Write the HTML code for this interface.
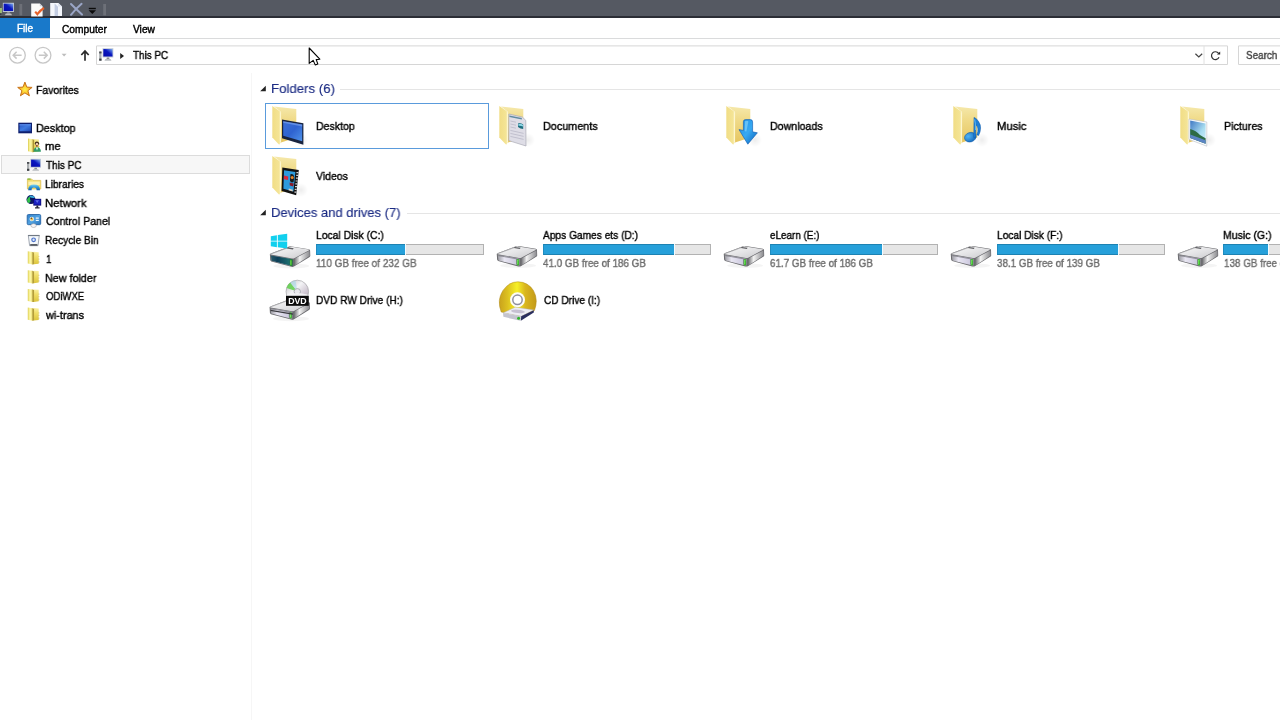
<!DOCTYPE html>
<html>
<head>
<meta charset="utf-8">
<title>This PC</title>
<style>
*{box-sizing:border-box;margin:0;padding:0}
html,body{width:1280px;height:720px;overflow:hidden;background:#fff}
body{font-family:"Liberation Sans",sans-serif;font-size:11.5px;color:#000;position:relative}
.abs{position:absolute}
.t{-webkit-text-stroke:.4px currentColor;will-change:transform;position:absolute;white-space:nowrap;transform-origin:0 50%;line-height:14px;height:14px}
#titlebar{left:0;top:0;width:1280px;height:18px;background:#555962;border-bottom:2px solid #2b2d35}
#ribbon{left:0;top:18px;width:1280px;height:21px;background:#fff;border-bottom:1px solid #dadbdc}
#filetab{left:0;top:18px;width:50px;height:20px;background:#1979ca}
#navdiv{left:251px;top:73px;width:1px;height:647px;background:#f6f6f6}
#selrow{left:1px;top:155px;width:249px;height:19px;background:#f7f7f7;border:1px solid #dcdcdc}
.gh{color:#1c2c84;font-size:13.5px;line-height:16px;height:16px;-webkit-text-stroke:.15px currentColor}
.gline{position:absolute;height:1px;background:#e5e5e5}
.bar{position:absolute;height:11px;border:1px solid #b2b2b2;background:#e6e6e6}
.bar i{position:absolute;left:-1px;top:-1px;height:11px;background:#26a0da;border-top:1px solid #1d82b2;border-bottom:1px solid #1d82b2;border-left:1px solid #1f8cc0;box-shadow:1px 0 0 #f2fbff;display:block}
.sub{color:#6d6d6d}
#selbox{left:265px;top:103px;width:224px;height:46px;border:1px solid #5a9bdc}
</style>
</head>
<body>
<!-- title bar -->
<div id="titlebar" class="abs"></div>
<!-- ribbon -->
<div id="ribbon" class="abs"></div>
<div id="filetab" class="abs"></div>
<span class="t" style="left:17px;top:22.4px;color:#fff;font-size:10px;transform:scaleX(1.0)">File</span>
<span class="t" style="left:61.6px;top:23px;font-size:10px;transform:scaleX(1.02)">Computer</span>
<span class="t" style="left:133.4px;top:23px;font-size:10px;transform:scaleX(1.02)">View</span>
<!-- nav row -->
<span class="t" style="left:133px;top:48px;transform:scaleX(.86)">This PC</span>
<span class="t" style="left:1246px;top:48px;transform:scaleX(0.86);color:#444">Search</span>
<!-- sidebar -->
<div id="navdiv" class="abs"></div>
<div id="selrow" class="abs"></div>
<span class="t" style="left:36px;top:83px;transform:scaleX(0.905)">Favorites</span>
<span class="t" style="left:36.2px;top:121px;transform:scaleX(0.937)">Desktop</span>
<span class="t" style="left:45.4px;top:139px;transform:scaleX(0.98)">me</span>
<span class="t" style="left:45.8px;top:158px;transform:scaleX(0.867)">This PC</span>
<span class="t" style="left:45.4px;top:177px;transform:scaleX(0.885)">Libraries</span>
<span class="t" style="left:45.4px;top:195.5px;transform:scaleX(0.985)">Network</span>
<span class="t" style="left:45.8px;top:214px;transform:scaleX(0.922)">Control Panel</span>
<span class="t" style="left:45.4px;top:233px;transform:scaleX(0.885)">Recycle Bin</span>
<span class="t" style="left:46px;top:252px;transform:scaleX(.87)">1</span>
<span class="t" style="left:45.4px;top:270.5px;transform:scaleX(0.935)">New folder</span>
<span class="t" style="left:45.6px;top:289px;transform:scaleX(0.83)">ODiWXE</span>
<span class="t" style="left:45.6px;top:308px;transform:scaleX(0.945)">wi-trans</span>
<!-- main: group headers -->
<span class="t gh" style="left:271.2px;top:81px;transform:scaleX(0.98)">Folders (6)</span>
<div class="gline" style="left:340px;top:89px;width:940px"></div>
<span class="t gh" style="left:271.2px;top:205px;transform:scaleX(0.965)">Devices and drives (7)</span>
<div class="gline" style="left:407px;top:213px;width:873px"></div>
<div id="selbox" class="abs"></div>
<!-- folder labels -->
<span class="t" style="left:316px;top:118.5px;transform:scaleX(0.917)">Desktop</span>
<span class="t" style="left:543px;top:118.5px;transform:scaleX(0.94)">Documents</span>
<span class="t" style="left:770px;top:118.5px;transform:scaleX(0.925)">Downloads</span>
<span class="t" style="left:997px;top:118.5px;transform:scaleX(0.98)">Music</span>
<span class="t" style="left:1224px;top:118.5px;transform:scaleX(0.93)">Pictures</span>
<span class="t" style="left:316px;top:168.5px;transform:scaleX(0.91)">Videos</span>
<!-- drive labels -->
<span class="t" style="left:316px;top:227.7px;transform:scaleX(0.9)">Local Disk (C:)</span>
<span class="t" style="left:543px;top:227.7px;transform:scaleX(0.885)">Apps Games ets (D:)</span>
<span class="t" style="left:770px;top:227.7px;transform:scaleX(0.86)">eLearn (E:)</span>
<span class="t" style="left:997px;top:227.7px;transform:scaleX(0.885)">Local Disk (F:)</span>
<span class="t" style="left:1223.2px;top:227.7px;transform:scaleX(0.915)">Music (G:)</span>
<span class="t" style="left:316px;top:293px;transform:scaleX(.88)">DVD RW Drive (H:)</span>
<span class="t" style="left:543.8px;top:293px;transform:scaleX(.88)">CD Drive (I:)</span>
<div class="bar" style="left:316px;top:244px;width:168px"><i style="width:88.5px"></i></div>
<div class="bar" style="left:543px;top:244px;width:168px"><i style="width:130.7px"></i></div>
<div class="bar" style="left:770px;top:244px;width:168px"><i style="width:111.7px"></i></div>
<div class="bar" style="left:997px;top:244px;width:168px"><i style="width:121.4px"></i></div>
<div class="bar" style="left:1223px;top:244px;width:168px"><i style="width:44.6px"></i></div>
<span class="t sub" style="left:316px;top:256px;transform:scaleX(0.866)">110 GB free of 232 GB</span>
<span class="t sub" style="left:543px;top:256px;transform:scaleX(.856)">41.0 GB free of 186 GB</span>
<span class="t sub" style="left:770px;top:256px;transform:scaleX(.856)">61.7 GB free of 186 GB</span>
<span class="t sub" style="left:997px;top:256px;transform:scaleX(.856)">38.1 GB free of 139 GB</span>
<span class="t sub" style="left:1224px;top:256px;transform:scaleX(.856)">138 GB free of 139 GB</span>

<svg class="abs" style="left:0;top:0" width="1280" height="720" viewBox="0 0 1280 720">
<defs>
<linearGradient id="gFront" x1="0" y1="0" x2="1" y2="0"><stop offset="0" stop-color="#f1dd85"/><stop offset=".75" stop-color="#f4e495"/><stop offset="1" stop-color="#fbf2c4"/></linearGradient>
<linearGradient id="gBack" x1="0" y1="0" x2="0" y2="1"><stop offset="0" stop-color="#f5e8aa"/><stop offset=".35" stop-color="#f0db8a"/><stop offset="1" stop-color="#e6c560"/></linearGradient>
<linearGradient id="gScreen" x1="0" y1="0" x2="1" y2="1"><stop offset="0" stop-color="#3a6fd8"/><stop offset=".5" stop-color="#2f63d0"/><stop offset="1" stop-color="#4f93ea"/></linearGradient>
<linearGradient id="gPcScr" x1="0" y1="1" x2="1" y2="0"><stop offset="0" stop-color="#0508a8"/><stop offset=".55" stop-color="#0a18c0"/><stop offset="1" stop-color="#7fb0ee"/></linearGradient>
<linearGradient id="gTop" x1="0" y1="0" x2="1" y2="1"><stop offset="0" stop-color="#fafafa"/><stop offset=".5" stop-color="#e4e4e6"/><stop offset="1" stop-color="#c9c9cc"/></linearGradient>
<linearGradient id="gSide" x1="0" y1="0" x2="1" y2="0"><stop offset="0" stop-color="#6e6e72"/><stop offset=".35" stop-color="#f2f2f2"/><stop offset="1" stop-color="#8a8a8e"/></linearGradient>
<linearGradient id="gFrontD" x1="0" y1="0" x2="1" y2="0"><stop offset="0" stop-color="#9c9ca2"/><stop offset=".3" stop-color="#e8e6f2"/><stop offset=".8" stop-color="#cfcbe0"/><stop offset="1" stop-color="#8a8a90"/></linearGradient>
<linearGradient id="gFrontC" x1="0" y1="0" x2="1" y2="0"><stop offset="0" stop-color="#2a5a68"/><stop offset=".3" stop-color="#0d3f58"/><stop offset=".8" stop-color="#1c6a6e"/><stop offset="1" stop-color="#25604a"/></linearGradient>
<linearGradient id="gArrow" x1="0" y1="0" x2="1" y2="1"><stop offset="0" stop-color="#1f8fe6"/><stop offset=".5" stop-color="#37a9f2"/><stop offset="1" stop-color="#0a5fb8"/></linearGradient>
<radialGradient id="gNote" cx=".35" cy=".35" r=".8"><stop offset="0" stop-color="#4fb4f4"/><stop offset="1" stop-color="#0d5fb4"/></radialGradient>
<linearGradient id="gGold" x1="0" y1="0" x2="1" y2="0"><stop offset="0" stop-color="#c9a21c"/><stop offset=".22" stop-color="#dcc020"/><stop offset=".48" stop-color="#f6f028"/><stop offset=".7" stop-color="#d9b61e"/><stop offset="1" stop-color="#c49a18"/></linearGradient>
<linearGradient id="gDisc" x1="0" y1="0" x2="1" y2="1"><stop offset="0" stop-color="#b8b8bc"/><stop offset=".4" stop-color="#f4f4f6"/><stop offset=".7" stop-color="#cfc6d2"/><stop offset="1" stop-color="#a8a8ac"/></linearGradient>
<linearGradient id="gSky" x1="0" y1="0" x2="1" y2="1"><stop offset="0" stop-color="#3f78c4"/><stop offset=".6" stop-color="#a8dcf0"/><stop offset="1" stop-color="#d8f0f8"/></linearGradient>
<linearGradient id="gDesk" x1="0" y1="0" x2="1" y2="1"><stop offset="0" stop-color="#2a57c8"/><stop offset=".5" stop-color="#3f7be0"/><stop offset="1" stop-color="#1f49b4"/></linearGradient>
<radialGradient id="gStar" cx=".5" cy=".55" r=".5"><stop offset="0" stop-color="#fff04a"/><stop offset=".45" stop-color="#fdd034"/><stop offset="1" stop-color="#e88a1c"/></radialGradient>
<linearGradient id="gSfL" x1="0" y1="0" x2="1" y2="0"><stop offset="0" stop-color="#d6c648"/><stop offset=".25" stop-color="#f6ee8c"/><stop offset=".6" stop-color="#fcf6a6"/><stop offset="1" stop-color="#e6d660"/></linearGradient>
<linearGradient id="gSfS" x1="0" y1="0" x2="1" y2="0"><stop offset="0" stop-color="#c8b448"/><stop offset=".5" stop-color="#a08c30"/><stop offset="1" stop-color="#d8bc48"/></linearGradient>
<linearGradient id="gSfR" x1="0" y1="0" x2="0" y2="1"><stop offset="0" stop-color="#faf0a0"/><stop offset=".4" stop-color="#f0de68"/><stop offset="1" stop-color="#dcc43c"/></linearGradient>
<radialGradient id="gShad"><stop offset="0" stop-color="#000" stop-opacity=".07"/><stop offset="1" stop-color="#000" stop-opacity="0"/></radialGradient>
<linearGradient id="gLib" x1="0" y1="0" x2="0" y2="1"><stop offset="0" stop-color="#7fd6f2"/><stop offset=".5" stop-color="#2f97dc"/><stop offset="1" stop-color="#145fa8"/></linearGradient>
<linearGradient id="gCp" x1="0" y1="0" x2="1" y2="1"><stop offset="0" stop-color="#2f7fc8"/><stop offset=".5" stop-color="#52a2e0"/><stop offset="1" stop-color="#2a74bc"/></linearGradient>
<!-- This PC mini icon 14x12 -->
<g id="pc">
<rect x="0" y="3.2" width="2.3" height="8.8" fill="#a9adb0"/><rect x="0" y="3.2" width="2.3" height="1.8" fill="#4a4d52"/><rect x="0" y="10" width="2.3" height="2" fill="#3c3f44"/>
<rect x="3.3" y="0" width="10.7" height="8.9" fill="#c3cad6"/>
<rect x="4.1" y=".8" width="9.1" height="7.2" fill="url(#gPcScr)"/>
<path d="M7.6 8.9h2.2l.5 1.7h-3.2z" fill="#8a8e94"/><path d="M5.2 12l1-1.5h5l1 1.5z" fill="#b9bcc0"/>
</g>
<!-- big folder base, origin = front panel box -->
<g id="fbase">
<ellipse cx="33" cy="36" rx="7" ry="7" fill="url(#gShad)"/>
<path d="M6 2.6 28.3 4.9V33.6L13 38.6V8z" fill="url(#gBack)"/>
<path d="M4.3 2.1 13 8V38.2L11.2 40.8 4.3 33.4z" fill="url(#gFront)"/>
<path d="M12.6 8.2V38.4" stroke="#fdf7d6" stroke-width=".8" fill="none"/>
</g>
<!-- small folder 11x13 -->
<g id="sfold">
<path d="M5.8.5 10.9.9V12.4L5.8 13z" fill="url(#gSfR)"/>
<path d="M10.7 4.600h.8v1.200h-.8zM10.700 7.200h.8v1.200h-.8zM10.700 9.800h.8v1.800h-.8z" fill="#c9b44a" opacity=".7"/>
<path d="M0 0 4.800.6V13.200L0 12.200z" fill="url(#gSfL)"/>
<path d="M4.400.6 6.300 1.200V13L4.400 13.200z" fill="url(#gSfS)"/>
</g>
<!-- hard drive, origin at left/top of drive body bbox (41 x 21) -->
<g id="hdd">
<ellipse cx="22" cy="19.8" rx="18" ry="2.4" fill="#000" opacity=".045"/>
<path d="M.6 8.6Q.2 8 1.4 7.4L19.8.4Q21 0 22.400.2L39.600 3Q40.800 3.300 40.800 4.200L41 9.600Q41 10.400 40 11L24.600 20.400Q23.400 21 22 20.600L2 15.200Q1 14.800.9 13.800z" fill="#6c6c70"/>
<path d="M1.400 7.600 20 .8Q21 .4 22.200.6L39.400 3.400Q40.400 3.700 39.400 4.300L25 12Q24 12.400 22.800 12.200L1.600 8.400Q.6 8 1.400 7.600z" fill="url(#gTop)"/>
<path d="M1.400 7.900 20 1.100" stroke="#8c8c90" stroke-width=".9" opacity=".7"/>
<path d="M18.600 1.100 24.400 2 23.600 3.200 17.600 2.300z" fill="#505054" opacity=".9"/>
<path d="M25.200 12.600 40.200 4.600 40.500 9.600 25 19.600z" fill="url(#gSide)"/>
<path d="M1.600 9.200 23.600 13 23.400 20 2.200 14.600z" fill="url(#gFrontD)"/>
<path d="M2.200 9.800 20.400 13V18.800" stroke="#66666c" stroke-width=".8" fill="none" opacity=".8"/>
<rect x="20.600" y="13.200" width="2.200" height="6.400" rx="1" fill="#35b028"/><rect x="21.100" y="14" width=".9" height="4.600" rx=".4" fill="#7fe86a"/>
</g>
</defs>
<!-- ===== title bar icons ===== -->
<use href="#pc" transform="translate(-.6 2.8) scale(1.04 1.03)"/>
<rect x="0" y="8" width="1.6" height="5" fill="#9cc06a"/>
<rect x="19.4" y="4" width="2.8" height="11.4" fill="#6d7078"/>
<rect x="103.2" y="4" width="2.8" height="11.4" fill="#6d7078"/>
<!-- properties -->
<path d="M31.2 3.4h8.6l2.8 2.8v10.2H31.2z" fill="#fbfbfb"/><path d="M39.8 3.4v2.8h2.8z" fill="#c9ccd4"/>
<path d="M35.2 11.6l2.2 2.6Q40.6 10 44 8" stroke="#e8622a" stroke-width="2.1" fill="none"/>
<!-- new folder -->
<path d="M50.2 3h8.2l3.6 3.4V16H50.2z" fill="#f4f6fb"/><path d="M54.6 3.4 58 6.8V16H54.6z" fill="#c4cde2"/><path d="M58.2 3v3.6h3.8z" fill="#dfe4ef"/>
<!-- delete X -->
<path d="M71 4Q76 9 82 14.6M81.6 3.8Q75.6 9 71 14.8" stroke="#9aa5c6" stroke-width="2" fill="none" stroke-linecap="round"/>
<!-- qat dropdown -->
<rect x="88.8" y="7.8" width="7" height="1.4" fill="#0b0b0b"/><path d="M88.6 10.2h7.4l-3.7 3.9z" fill="#0b0b0b"/>
<!-- ===== nav buttons ===== -->
<path d="M96.500 45.900H1227.500V64.500H96.500zM1238.500 45.900H1290V64.500H1238.500z" fill="none" stroke="#d6d6d6" stroke-width="1"/>
<g fill="none" stroke="#c7c7c7" stroke-width="1.3">
<circle cx="17.4" cy="55.2" r="7.9"/><circle cx="43" cy="55.2" r="7.9"/>
<path d="M21.6 55.2H13.4M16.6 51.8 13.2 55.2 16.6 58.6M38.8 55.2H47M43.8 51.8 47.2 55.2 43.8 58.6" stroke-width="1.5"/>
</g>
<path d="M61.6 53.8h5l-2.5 2.6z" fill="#bdbdbd"/>
<path d="M85 60.800V51.200M81.300 55 85 51.100 88.700 55" stroke="#2b2b2b" stroke-width="1.7" fill="none"/>
<use href="#pc" transform="translate(99.2 48.2) scale(1.01 1.04)"/>
<path d="M120.2 53.1v5.800l3.800-2.900z" fill="#222"/>
<path d="M1195.4 53.8 1198.8 57 1202.2 53.8" stroke="#444" stroke-width="1.2" fill="none"/>
<path d="M1204 46v19" stroke="#e0e0e0" stroke-width="1"/>
<path d="M1218.600 53.400A3.900 3.900 0 1 0 1219 57.200" stroke="#333" stroke-width="1.200" fill="none"/><path d="M1217 54.400h3.200v-3z" fill="#222"/>
<!-- ===== sidebar icons ===== -->
<!-- star -->
<path d="M24.9 82.1 26.8 87.1 32.1 87.4 27.9 90.7 29.4 95.8 24.9 92.9 20.4 95.8 21.9 90.7 17.7 87.4 23.0 87.1z" fill="url(#gStar)" stroke="#c87418" stroke-width="1" stroke-linejoin="miter"/>
<!-- desktop -->
<rect x="18.3" y="122.7" width="13.7" height="10.6" fill="#0e1f6e"/><rect x="19.5" y="124" width="11.3" height="7.3" fill="url(#gDesk)"/><rect x="19.5" y="124" width="11.3" height="1.6" fill="#5a8ae6" opacity=".7"/>
<!-- me (user folder) -->
<use href="#sfold" transform="translate(28 138.6) scale(1 1.03)"/>
<circle cx="36.900" cy="143.600" r="2.100" fill="#3e2a18"/><ellipse cx="36.900" cy="144.400" rx="1.300" ry="1.600" fill="#f0d0b0"/><ellipse cx="36.900" cy="145.900" rx=".9" ry=".8" fill="#7a2a1a"/>
<path d="M33.600 151.800Q33.600 147.300 37 147.300Q40.900 147.300 40.900 151.800z" fill="#2f9c6a"/><path d="M35.800 147.600 37 150.600 38.200 147.600z" fill="#e4f6ee"/>
<!-- this pc -->
<use href="#pc" transform="translate(27 158.8)"/>
<!-- libraries -->
<path d="M27.400 179.200h4.600l1 1.200h7.800v8.600H27.400z" fill="#f3dc6c" stroke="#dcbc52" stroke-width=".7"/><path d="M28.400 181.600h11.400v3.400H28.400z" fill="#fbf1b2"/>
<path d="M27.400 178.400h3.200v1.400h-3.200z" fill="#86b83a"/>
<path d="M28.200 190.300Q28 184.400 34 184.400Q40.200 184.400 40 190.300H36.600Q36.800 187.400 34 187.400Q31.400 187.400 31.600 190.300z" fill="url(#gLib)"/>
<!-- network -->
<circle cx="31" cy="199.600" r="4.500" fill="#0c1560"/><path d="M27 199.400Q28 197 30.200 196.600Q29.600 199 30.600 201Q29.800 203.400 28.200 203Q26.800 201.400 27 199.400z" fill="#2fc04a"/><path d="M29.600 195.600Q33.400 195 35 197.800Q32.400 198.600 29.600 197z" fill="#3aa8d8"/>
<rect x="33.300" y="198.800" width="7.900" height="6.800" fill="#0b0b78"/><rect x="34.100" y="199.600" width="6.300" height="5" fill="#1c22c4"/><path d="M35.400 200.200 37.200 203 39 200.200z" fill="#7080ec" opacity=".8"/><path d="M36.400 205.600h1.800v1.700h1.400v1.200h-4.600v-1.200h1.400z" fill="#2a2a3a"/>
<!-- control panel -->
<rect x="27.200" y="214.500" width="13.500" height="10.200" rx="1.300" fill="url(#gCp)" stroke="#1c5a9e" stroke-width=".8"/>
<circle cx="31.800" cy="219" r="2.300" fill="#d8f0fa"/><circle cx="31.800" cy="219" r="1.500" fill="#f0b84a"/><path d="M31.800 219V217.500A1.500 1.500 0 0 0 30.400 218.600z" fill="#3a2a1a"/>
<rect x="35.800" y="217.500" width="3" height="1.200" fill="#f2faff"/><rect x="35.800" y="219.800" width="3" height="1.200" fill="#f2faff"/>
<ellipse cx="33.600" cy="225.600" rx="2.700" ry="1.900" fill="#f6f4f6" stroke="#a8a4a8" stroke-width=".6"/>
<!-- recycle bin -->
<path d="M28.300 235.400h11l-1.300 10.300h-8.400z" fill="#f4f8fb" stroke="#8a929e" stroke-width=".8"/><path d="M28.100 235.600h11.400" stroke="#6c747e" stroke-width="1"/><path d="M30.200 244.900h7.200" stroke="#2a2e36" stroke-width="1.300"/>
<circle cx="33.600" cy="239.800" r="1.800" fill="#dfe8fa" stroke="#4a70c8" stroke-width="1.200"/>
<!-- folders -->
<use href="#sfold" transform="translate(27.800 251.300)"/>
<use href="#sfold" transform="translate(27.800 270.200)"/>
<use href="#sfold" transform="translate(27.800 288.900)"/>
<use href="#sfold" transform="translate(27.800 307.600)"/>
<!-- group header triangles -->
<path d="M265.800 85.800V91.200H260.200z" fill="#222"/><path d="M265.800 209.800V215.200H260.200z" fill="#222"/>
<!-- ===== big folders ===== -->
<!-- Desktop -->
<use href="#fbase" transform="translate(268 104)"/>
<path d="M282 119.600 303.400 123.200V144.800L282 138.200z" fill="#18233f"/><path d="M283.200 121.200 302.200 124.600V141.200L283.200 135.800z" fill="url(#gScreen)"/><path d="M283.200 121.200 302.200 124.600V126.400L283.200 122.800z" fill="#7fa6ee" opacity=".6"/>
<!-- Documents -->
<use href="#fbase" transform="translate(495 104)"/>
<path d="M508.800 114 522.300 117 525.800 120.400 526 146 508.800 140.600z" fill="#dedde6" stroke="#a9a9b4" stroke-width=".7"/>
<path d="M509.400 115.400 521.800 118v1.600L509.400 117z" fill="#5f8aa2"/>
<path d="M510.400 121 516 122.200M510.400 124 516 125.200M510.400 127 516 128.200M510.400 130.400 523.600 133.400M510.400 133.400 523.600 136.400M510.400 136.400 523.600 139.400" stroke="#bdbccb" stroke-width=".9"/>
<path d="M518 123.400Q520.600 122.400 523.200 124.600V129Q520.400 128.800 518 127z" fill="#1f6f7e"/><path d="M518.400 124Q520.600 123.200 523 125v1.400Q520.600 125.400 518.400 125.800z" fill="#8fd6e6"/>
<!-- Downloads -->
<use href="#fbase" transform="translate(722 104)"/>
<path d="M743.400 121.600Q743.400 119.600 745.600 119.600H750.400Q752.600 119.600 752.600 122V131.800L757.400 132.800 747.800 144.200 739 129.600 743.400 130.400z" fill="url(#gArrow)" stroke="#0b58ae" stroke-width=".6"/>
<path d="M745 121.200Q747.400 120 748.400 121.400L746.400 131.600 744.800 131.200z" fill="#7fd0fb" opacity=".7"/>
<!-- Music -->
<use href="#fbase" transform="translate(949 104)"/>
<ellipse cx="970.300" cy="137.200" rx="5.900" ry="4.700" transform="rotate(-18 970.300 137.200)" fill="url(#gNote)" stroke="#0a56a8" stroke-width=".5"/>
<path d="M974 117.400Q976.400 118 978.600 121.600Q982.600 127.400 978.600 135.600L976.800 134.800Q979.600 128.400 975.800 124.400V137.400H973.800z" fill="#1f7fd6" stroke="#0a56a8" stroke-width=".5"/>
<path d="M974.600 119.400Q975.800 123 975.400 130" stroke="#7fd0fb" stroke-width=".9" fill="none" opacity=".8"/>
<!-- Pictures -->
<use href="#fbase" transform="translate(1176 104)"/>
<path d="M1189 119 1206.800 122V146.200L1189 139.400z" fill="#fbfcfd" stroke="#b9bec6" stroke-width=".6"/>
<path d="M1190.200 120.600 1205.600 123.400V143.800L1190.200 138z" fill="url(#gSky)"/>
<path d="M1190.200 129Q1196 130.400 1200 135Q1203 137 1205.600 138.200V143.800L1190.200 138z" fill="#2d6b44"/>
<path d="M1190.200 134.600 1205.600 140.200V143.800L1190.200 138z" fill="#5b84c4"/>
<!-- Videos -->
<use href="#fbase" transform="translate(268 154)"/>
<path d="M282.300 167.600 298.800 170 296.200 195.200 281.600 191z" fill="#121212"/>
<path d="M284 170.200 295.400 172 293.400 191.600 283.400 188.800z" fill="#2d9bdc"/>
<path d="M284 175.600 288.200 176.400 288 180 283.800 179.200z" fill="#d82a3a"/>
<path d="M290.400 174.200Q293.800 173.600 294.200 177.200L293.600 182Q291 183.400 290 180.600z" fill="#1b1b1b"/><circle cx="292.200" cy="177.400" r="1.500" fill="#e8872a"/><path d="M289.600 182.400 293.800 183.400 293.200 186.400 289.800 185.400z" fill="#8a1a2a"/>
<path d="M288.800 188.600 292.800 189.800 292.600 191.400 288.600 190.200z" fill="#e0d0c0"/>
<path d="M296.400 172.600h2M296.200 175.400h2M295.900 178.200h2M295.600 181h2M295.300 183.800h2M295 186.600h2M294.700 189.400h2M294.400 192.200h2" stroke="#cfd2d6" stroke-width="1.200"/>
<!-- ===== drives ===== -->
<!-- C: -->
<g transform="translate(269.300 246.200)"><use href="#hdd"/><path d="M1.600 9.200 23.600 13 23.400 20 2.200 14.600z" fill="url(#gFrontC)"/><rect x="20.600" y="13.200" width="2.200" height="6.400" rx="1" fill="#2f9a24"/><rect x="21.100" y="14" width=".9" height="4.600" rx=".4" fill="#76e060"/></g>
<g fill="#12d0ee"><path d="M270.800 236.200 276.900 235.200V240.700H270.800zM277.800 235 287.200 233.700V240.700H277.800zM270.800 241.600H276.900V247.200L270.800 246.300zM277.800 241.600H287.200V248.600L277.800 247.300z"/></g>
<use href="#hdd" transform="translate(496.200 245.800)"/>
<use href="#hdd" transform="translate(723.200 245.800)"/>
<use href="#hdd" transform="translate(950.200 245.800)"/>
<use href="#hdd" transform="translate(1177.200 245.800)"/>
<!-- DVD -->
<use href="#hdd" transform="translate(269 299)"/>
<path d="M269.800 308.600 292.400 312.400 292.200 313.600 270 309.800z" fill="#3a3a3e" transform="translate(.6 1.200)"/>
<ellipse cx="297.300" cy="291.600" rx="11.300" ry="11.400" fill="url(#gDisc)" stroke="#9a9a9e" stroke-width=".6"/>
<path d="M297.300 291.600 286.600 288Q287.400 284.800 290.200 282.600z" fill="#5fd04a" opacity=".85"/><path d="M297.300 291.600 290.200 282.600Q292.600 280.800 295.600 280.400z" fill="#a8d8e8" opacity=".6"/>
<ellipse cx="297.300" cy="291.600" rx="3.200" ry="3" fill="#e8e8ec" stroke="#a0a0a8" stroke-width=".8"/>
<path d="M287 294.600Q297 291.600 307.600 294.600V296.400H287z" fill="#f4f4f6" opacity=".9"/>
<rect x="286" y="295.800" width="22.800" height="10" fill="#0a0a0a"/>
<text x="297.400" y="304.200" text-anchor="middle" font-family="Liberation Sans, sans-serif" font-weight="bold" font-size="9.200" fill="#fff" textLength="18.500" lengthAdjust="spacingAndGlyphs">DVD</text>
<!-- CD -->
<path d="M501.200 312Q496.600 300 503 290.400Q509 281.800 518 281.800Q528 282 533.400 290.400Q538.600 299.600 534.400 310.600L521 316z" fill="url(#gGold)" stroke="#b08a18" stroke-width=".5"/>
<circle cx="517.500" cy="299.800" r="7.500" fill="#fdfdf6"/><circle cx="517.500" cy="299.800" r="4.700" fill="#fff" stroke="#8e8ea0" stroke-width="1.500"/>
<path d="M503.300 312.800 515.400 307.200 533.800 310 521.400 316.200z" fill="#eeeef4" stroke="#b0b0bc" stroke-width=".4"/><ellipse cx="518" cy="311.400" rx="7" ry="1.700" fill="#c6c0d2" transform="rotate(5 518 311.400)"/>
<path d="M503 313 521 316.300 520.400 320.800 503.400 316.800z" fill="#c4c4d0"/>
<path d="M521.200 316.300 533.800 310.200V312.400L520.800 320.800z" fill="#2b2f5e"/>
<circle cx="518.600" cy="318.200" r="1.500" fill="#2fb42a"/>
<!-- cursor -->
<path d="M309.200 48V63.400L313.200 60.400 315.200 64.900 317.800 63.900 316.200 59.600 319.800 59.200z" fill="#fff" stroke="#000" stroke-width="1.100" stroke-linejoin="round"/>

</svg>
</body>
</html>
